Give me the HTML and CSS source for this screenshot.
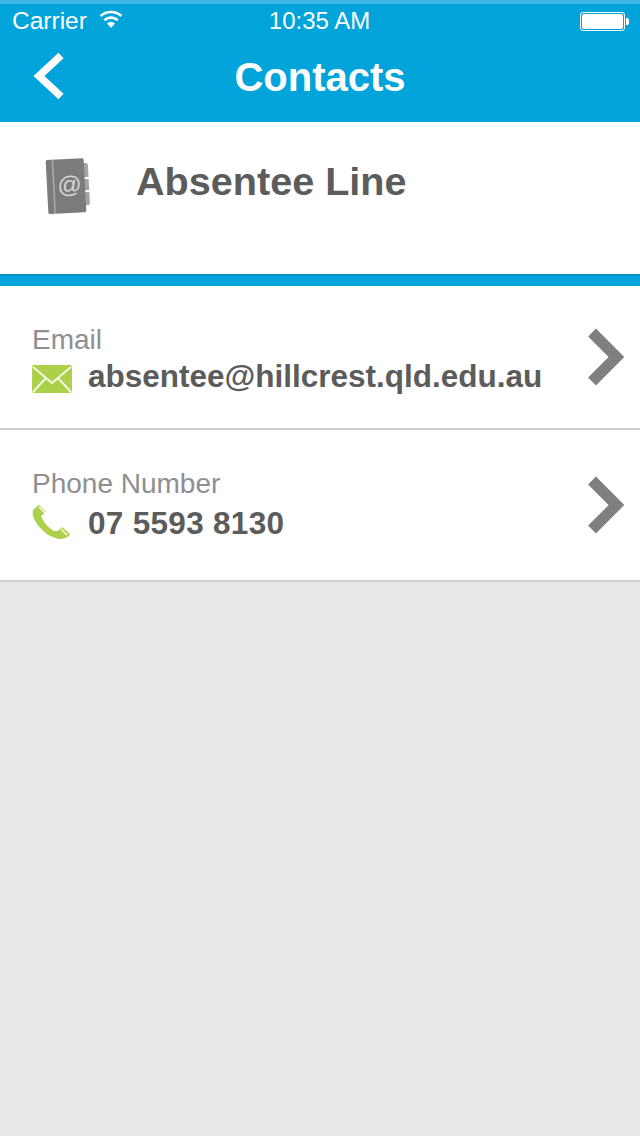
FILE: index.html
```html
<!DOCTYPE html>
<html lang="en">
<head>
<meta charset="utf-8">
<title>Contacts</title>
<link rel="stylesheet" href="styles.css">
</head>
<body>
<header class="top">
  <div class="status">
    <div class="status-left">
      <span>Carrier</span>
      <svg class="wifi" width="26" height="20" viewBox="0 0 26 20"><path d="M13 19 9 14.4a6 6 0 0 1 8 0Z" fill="#fff"/><path d="M6.3 11.2a10 10 0 0 1 13.4 0M2.6 7a15.4 15.4 0 0 1 20.8 0" fill="none" stroke="#fff" stroke-width="2.6"/></svg>
    </div>
    <span class="time">10:35 AM</span>
    <div class="battery"><div class="battery-body"><div class="battery-fill"></div></div><div class="battery-tip"></div></div>
  </div>
  <nav class="nav">
    <svg class="back" width="34" height="48" viewBox="0 0 34 48"><path d="M31 3.500 9 24l22 20.500" fill="none" stroke="#fff" stroke-width="7.500"/></svg>
    <h1>Contacts</h1>
  </nav>
</header>
<section class="title-row">
  <svg class="book" width="48" height="60" viewBox="0 0 48 60">
    <g transform="rotate(-3 24 30)">
      <path d="M39 8h5l1 2v12h-6zM39 24h6v11h-6zM39 37h6v11l-1 2h-5z" fill="#a3a3a3"/>
      <rect x="3" y="3" width="38" height="54" rx="1.500" fill="#7b7b7b"/>
      <rect x="9" y="3" width="1.600" height="54" fill="#a9a9a9"/>
      <text x="25.500" y="37" class="book-at">@</text>
    </g>
  </svg>
  <h2>Absentee Line</h2>
</section>
<div class="bar"></div>
<ul class="list">
  <li class="row row-email">
    <div class="row-text">
      <span class="label">Email</span>
      <div class="value">
        <svg class="ico" width="42" height="30" viewBox="0 0 42 30"><rect x="0" y="1" width="40" height="28" rx="2" fill="#add04b"/><path d="M1 3 20 19 39 3M1 28l13-14M39 28 26 14" fill="none" stroke="#f3f8e4" stroke-width="2"/></svg>
        <span>absentee@hillcrest.qld.edu.au</span>
      </div>
    </div>
    <svg class="chev" width="38" height="60" viewBox="0 0 38 60"><path d="M4 5.500 28.500 30 4 54.500" fill="none" stroke="#7f7f7f" stroke-width="11"/></svg>
  </li>
  <li class="row row-phone">
    <div class="row-text">
      <span class="label">Phone Number</span>
      <div class="value">
        <svg class="ico" width="42" height="36" viewBox="0 0 42 36"><path d="M7 0 1 5C0 8 1 13 5 19c6 8 14 14 23 15 3 0 6-1 10-4l-2-3-6-5-4 4h-4C18 24 12 18 10 13l-1-2 5-4Z" fill="#add04b"/><path d="m7 2 6 6M29 24l6 6" stroke="#fff" stroke-width="1.300"/></svg>
        <span>07 5593 8130</span>
      </div>
    </div>
    <svg class="chev" width="38" height="60" viewBox="0 0 38 60"><path d="M4 5.500 28.500 30 4 54.500" fill="none" stroke="#7f7f7f" stroke-width="11"/></svg>
  </li>
</ul>
</body>
</html>
```
FILE: styles.css
```css
* { box-sizing: border-box; margin: 0; padding: 0; }
html, body { height: 100%; }
body { background: #e9e9e9; font-family: "Liberation Sans", Arial, sans-serif; overflow: hidden; }
.top { height: 122px; background: #00a3da; border-top: 4px solid #3eb8e3; color: #fff; display: flex; flex-direction: column; }
.status { height: 32px; padding: 2px 11px 0 12px; display: grid; grid-template-columns: 1fr auto 1fr; align-items: center; font-size: 24px; }
.status-left { display: flex; align-items: center; gap: 11px; font-size: 24.500px; }
.wifi { display: block; margin-top: -4px; }
.time { margin-left: -2px; }
.battery { display: flex; align-items: center; gap: 1px; justify-self: end; }
.battery-body { width: 45px; height: 19px; border: 1px solid #fff; border-radius: 3px; padding: 1px; }
.battery-fill { height: 100%; background: #fff; border-radius: 2px; }
.battery-tip { width: 3px; height: 7px; background: #fff; border-radius: 0 2px 2px 0; }
.nav { flex: 1; display: flex; align-items: center; justify-content: center; position: relative; padding-bottom: 4px; }
.nav h1 { font-size: 40px; font-weight: 700; }
.back { position: absolute; left: 30px; top: 16px; }
.title-row { height: 152px; background: #fff; display: flex; align-items: flex-start; padding: 34px 0 0 44px; gap: 44px; }
.title-row h2 { font-size: 39.600px; font-weight: 700; color: #5c5c5c; margin-top: 3px; }
.book-at { font-family: "Liberation Sans", Arial, sans-serif; font-size: 24px; fill: #d5d5d5; text-anchor: middle; }
.bar { height: 12px; background: #00a3da; border-top: 2px solid #0391c2; }
.list { list-style: none; background: #fff; }
.row { display: flex; align-items: center; justify-content: space-between; border-bottom: 2px solid #cfcfcf; padding: 0 14px 0 32px; }
.row-email { height: 144px; }
.row-phone { height: 152px; }
.row-text { display: flex; flex-direction: column; gap: 3px; }
.row-email .row-text { padding-top: 6px; gap: 0; }
.row-email .ico { margin-top: 6px; }
.label { font-size: 28px; color: #8e8e93; line-height: 32px; }
.value { display: flex; align-items: center; gap: 14px; font-size: 31.500px; font-weight: 700; color: #5c5c5c; line-height: 40px; }
.row-phone .value span { letter-spacing: 0.300px; }
.ico { flex: none; display: block; }
.chev { display: block; }
```
